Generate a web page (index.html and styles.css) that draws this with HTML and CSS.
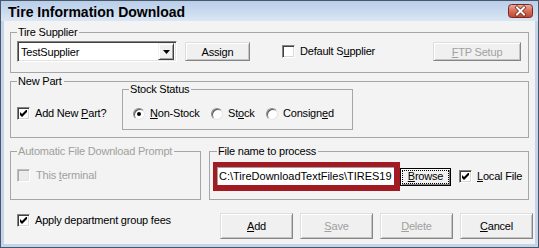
FILE: index.html
```html
<!DOCTYPE html>
<html>
<head>
<meta charset="utf-8">
<title>Tire Information Download</title>
<link rel="stylesheet" href="styles.css">
</head>
<body>
<div class="window">
  <div class="titlebar">
    <span class="title">Tire Information Download</span>
    <span class="close">
      <svg width="25" height="14" viewBox="0 0 25 14">
        <defs>
          <linearGradient id="cg" x1="0" y1="0" x2="0" y2="1">
            <stop offset="0" stop-color="#eab1a3"/>
            <stop offset="0.45" stop-color="#d9735f"/>
            <stop offset="1" stop-color="#c4412b"/>
          </linearGradient>
        </defs>
        <rect x="0.5" y="0.5" width="24" height="13" rx="3" fill="url(#cg)" stroke="#772a20"/>
        <path d="M9 3.5 L16 10.5 M16 3.5 L9 10.5" stroke="#6b2219" stroke-width="3.4" stroke-linecap="square"/>
        <path d="M9 3.5 L16 10.5 M16 3.5 L9 10.5" stroke="#ffffff" stroke-width="2" stroke-linecap="square"/>
      </svg>
    </span>
  </div>
  <div class="client">
    <fieldset class="group g-supplier">
      <legend>Tire Supplier</legend>
      <div class="combo">
        <span class="combo-text">TestSupplier</span>
        <span class="combo-btn">
          <svg width="7" height="4" viewBox="0 0 7 4"><polygon points="0,0 7,0 3.5,4" fill="#000"/></svg>
        </span>
      </div>
      <button class="btn btn-assign">Assign</button>
      <label class="check chk-default"><span class="box"></span><span>Default S<u>u</u>pplier</span></label>
      <button class="btn btn-ftp" disabled><span><u>F</u>TP Setup</span></button>
    </fieldset>

    <fieldset class="group g-newpart">
      <legend>New Part</legend>
      <label class="check chk-addnew"><span class="box"><svg class="tick" width="7" height="7" viewBox="0 0 7 7"><polygon points="0,2 2,4 7,-1 7,2 2,7 0,5" fill="#000"/></svg></span><span>Add New <u>P</u>art?</span></label>
      <fieldset class="group g-stock">
        <legend>Stock Status</legend>
        <label class="radio r-non"><span class="dot on"></span><span><u>N</u>on-Stock</span></label>
        <label class="radio r-stock"><span class="dot"></span><span>St<u>o</u>ck</span></label>
        <label class="radio r-cons"><span class="dot"></span><span>Consign<u>e</u>d</span></label>
      </fieldset>
    </fieldset>

    <div class="row3">
      <fieldset class="group g-auto is-disabled">
        <legend>Automatic File Download Prompt</legend>
        <label class="check chk-terminal"><span class="box box-disabled"></span><span>This <u>t</u>erminal</span></label>
      </fieldset>
      <fieldset class="group g-file">
        <legend>File name to process</legend>
        <div class="hl">
          <div class="textbox">C:\TireDownloadTextFiles\TIRES19</div>
        </div>
        <button class="btn btn-browse"><span class="focus"><u>B</u>rowse</span></button>
        <label class="check chk-local"><span class="box"><svg class="tick" width="7" height="7" viewBox="0 0 7 7"><polygon points="0,2 2,4 7,-1 7,2 2,7 0,5" fill="#000"/></svg></span><span><u>L</u>ocal File</span></label>
      </fieldset>
    </div>

    <div class="row4">
      <label class="check chk-apply"><span class="box"><svg class="tick" width="7" height="7" viewBox="0 0 7 7"><polygon points="0,2 2,4 7,-1 7,2 2,7 0,5" fill="#000"/></svg></span><span>Apply department group fees</span></label>
      <div class="actions">
        <button class="btn"><span><u>A</u>dd</span></button>
        <button class="btn" disabled><span><u>S</u>ave</span></button>
        <button class="btn" disabled><span><u>D</u>elete</span></button>
        <button class="btn"><span><u>C</u>ancel</span></button>
      </div>
    </div>
  </div>
</div>
</body>
</html>
```
FILE: styles.css
```css
* { box-sizing: border-box; }
html, body { margin: 0; padding: 0; }
body {
  width: 539px;
  height: 248px;
  overflow: hidden;
  background: #f3f3f3;
  font-family: "Liberation Sans", Arial, sans-serif;
  font-size: 11px;
  letter-spacing: -0.2px;
  color: #000;
}
u { text-decoration: underline; text-underline-offset: 1px; }

.window {
  width: 539px;
  height: 248px;
  border: 1px solid #4b5666;
  background: #c3d5eb;
  padding: 0 3px 3px;
  display: flex;
  flex-direction: column;
}
.titlebar {
  height: 20px;
  margin: 0 -3px;
  padding: 0 5px 0 7px;
  display: flex;
  align-items: center;
  justify-content: space-between;
  background: linear-gradient(#b8cee9, #dae6f4);
}
.title {
  font-size: 14px;
  font-weight: bold;
  letter-spacing: 0;
  line-height: 16px;
  padding-top: 2px;
}
.close { display: block; width: 25px; height: 14px; }
.close svg { display: block; }

.client {
  flex: 1;
  background: #f3f3f3;
  padding: 5px 6px 0;
}

.group {
  margin: 0;
  border: 1px solid #a6a6a6;
  min-width: 0;
}
.group > legend {
  padding: 0 2px 0 1px;
  line-height: 13px;
  font-size: 11px;
}
.is-disabled > legend { color: #a0a0a0; }

/* Tire supplier */
.g-supplier {
  display: flex;
  align-items: center;
  padding: 2px 7px 10px 6px;
}
.combo {
  width: 160px;
  height: 21px;
  flex: none;
  background: #fff;
  border: 1px solid;
  border-color: #848484 #fff #fff #848484;
  box-shadow: inset 1px 1px #404040, inset -1px -1px #e3e3e3;
  display: flex;
  align-items: center;
  padding: 0 2px 0 3px;
}
.combo-text { flex: 1; white-space: nowrap; overflow: hidden; }
.combo-btn {
  width: 16px;
  height: 17px;
  flex: none;
  background: #f0f0f0;
  border: 1px solid;
  border-color: #f0f0f0 #404040 #404040 #f0f0f0;
  box-shadow: inset 1px 1px #fff, inset -1px -1px #a0a0a0;
  display: flex;
  align-items: center;
  justify-content: center;
}
.combo-btn svg { display: block; }

.btn {
  font: inherit;
  letter-spacing: inherit;
  color: #000;
  background: #f0f0f0;
  border: 1px solid;
  border-color: #dedede #858585 #858585 #dedede;
  box-shadow: inset 1px 1px #fff, inset -1px -1px #c4c4c4;
  margin: 0;
  padding: 0;
  display: flex;
  align-items: center;
  justify-content: center;
  flex: none;
}
.btn:disabled { color: #a0a0a0; }
.btn-assign { width: 65px; height: 19px; margin-left: 8px; }
.btn-ftp { width: 88px; height: 19px; margin-left: auto; }

.check {
  display: flex;
  align-items: center;
  gap: 5px;
  line-height: 13px;
  white-space: nowrap;
  flex: none;
}
.box {
  width: 13px;
  height: 13px;
  flex: none;
  background: #fff;
  border: 1px solid;
  border-color: #848484 #fff #fff #848484;
  box-shadow: inset 1px 1px #404040, inset -1px -1px #d8d8d8;
  display: flex;
  align-items: center;
  justify-content: center;
}
.box .tick { display: block; }
.box-disabled {
  background: #ececec;
  border-color: #bdbdbd #fff #fff #bdbdbd;
  box-shadow: inset 1px 1px #a8a8a8, inset -1px -1px #e4e4e4;
}
.chk-default { margin-left: 32px; }
.chk-terminal { color: #a0a0a0; gap: 6px; }

/* New part */
.g-newpart {
  display: flex;
  align-items: flex-start;
  margin-top: 2px;
  padding: 0 7px 7px 6px;
}
.chk-addnew { width: 105px; margin-top: 19px; }
.g-stock {
  width: 231px;
  flex: none;
  margin-top: -5px;
  display: flex;
  align-items: center;
  padding: 11px 0 9px 10px;
}
.g-stock > legend { margin-left: -4px; }
.radio {
  display: flex;
  align-items: center;
  gap: 5px;
  line-height: 13px;
  white-space: nowrap;
  flex: none;
}
.r-non { width: 78px; }
.r-stock { width: 55px; }
.dot {
  width: 12px;
  height: 12px;
  flex: none;
  border-radius: 50%;
  background: #fff;
  border: 1px solid;
  border-color: #8a8a8a #e6e6e6 #e6e6e6 #8a8a8a;
  box-shadow: inset 1px 1px #5a5a5a;
  display: flex;
  align-items: center;
  justify-content: center;
}
.dot.on::after {
  content: "";
  width: 4px;
  height: 4px;
  border-radius: 50%;
  background: #000;
}

/* Row 3 */
.row3 { display: flex; margin-top: 7px; }
.g-auto {
  width: 191px;
  flex: none;
  margin-right: 8px;
  padding: 11px 6px 8px;
}
.g-file {
  flex: 1;
  display: flex;
  align-items: center;
  padding: 4px 6px 8px 3px;
}
.g-file > legend { margin-left: 4px; }
.hl {
  width: 187px;
  height: 29px;
  flex: none;
  border: solid #a31b22;
  border-width: 5px 6px 6px 4px;
  display: flex;
}
.textbox {
  flex: 1;
  height: 18px;
  background: #fff;
  border-top: 1px solid #a0a0a0;
  border-left: 1px solid #a0a0a0;
  padding-left: 1px;
  line-height: 16px;
  letter-spacing: 0;
  white-space: nowrap;
  overflow: hidden;
}
.btn-browse {
  width: 51px;
  height: 18px;
  border: 1px solid #000;
  box-shadow: inset 1px 1px #fff, inset -1px -1px #808080;
}
.btn-browse .focus {
  width: 47px;
  height: 14px;
  border: 1px dotted #000;
  display: flex;
  align-items: center;
  justify-content: center;
  line-height: 11px;
}
.chk-local { margin-left: 8px; }

/* Row 4 */
.row4 {
  display: flex;
  align-items: flex-start;
  margin-top: 13px;
  padding-left: 7px;
  margin-right: -4px;
}
.chk-apply { margin-top: 1px; }
.actions { margin-left: auto; display: flex; gap: 7px; }
.actions .btn { width: 73px; height: 26px; }
```
